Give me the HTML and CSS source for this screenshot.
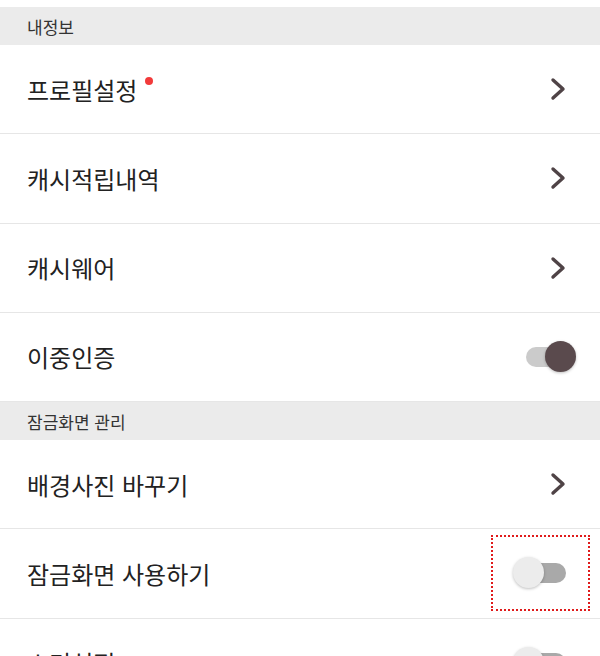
FILE: index.html
```html
<!DOCTYPE html>
<html lang="ko">
<head>
    <meta charset="UTF-8">
    <meta name="viewport" content="width=device-width, initial-scale=1.0">
    <title>설정</title>
    <link rel="stylesheet" href="styles.css">
</head>
<body>
    <div class="settings">
        <div class="section-title">내정보</div>

        <div class="row">
            <span class="label">프로필설정<span class="new-dot"></span></span>
            <svg class="chevron" viewBox="0 0 16 24"><path d="M3 3 L13 12 L3 21"/></svg>
        </div>
        <div class="row">
            <span class="label">캐시적립내역</span>
            <svg class="chevron" viewBox="0 0 16 24"><path d="M3 3 L13 12 L3 21"/></svg>
        </div>
        <div class="row">
            <span class="label">캐시웨어</span>
            <svg class="chevron" viewBox="0 0 16 24"><path d="M3 3 L13 12 L3 21"/></svg>
        </div>
        <div class="row">
            <span class="label">이중인증</span>
            <div class="switch on"><span class="track"></span><span class="knob"></span></div>
        </div>

        <div class="section-title">잠금화면 관리</div>

        <div class="row">
            <span class="label">배경사진 바꾸기</span>
            <svg class="chevron" viewBox="0 0 16 24"><path d="M3 3 L13 12 L3 21"/></svg>
        </div>
        <div class="row">
            <span class="label">잠금화면 사용하기</span>
            <div class="focus-box">
                <div class="switch"><span class="track"></span><span class="knob"></span></div>
            </div>
        </div>
        <div class="row">
            <span class="label">소리설정</span>
            <div class="switch"><span class="track"></span><span class="knob"></span></div>
        </div>
    </div>
</body>
</html>
```

FILE: styles.css
```css
* {
    box-sizing: border-box;
}

body {
    margin: 0;
    background-color: #ffffff;
    font-family: "Noto Sans CJK KR", "Noto Sans", sans-serif;
    color: #222;
    overflow: hidden;
}

.settings {
    padding-top: 7px;
}

.section-title {
    background-color: #ebebeb;
    height: 38px;
    padding-left: 27px;
    display: flex;
    align-items: center;
    font-size: 17px;
    color: #333;
}

.row {
    height: 89.25px;
    border-bottom: 1px solid #e6e6e6;
    display: flex;
    align-items: center;
    justify-content: space-between;
    padding: 0 24px 0 27px;
}

.label {
    font-size: 24px;
    position: relative;
}

.new-dot {
    position: absolute;
    top: 5px;
    right: -16px;
    width: 8px;
    height: 8px;
    border-radius: 50%;
    background-color: #f23a3a;
}

.chevron {
    width: 16px;
    height: 24px;
    margin-right: 10px;
    fill: none;
    stroke: #4f4346;
    stroke-width: 3.4;
    stroke-linecap: round;
    stroke-linejoin: round;
}

.switch {
    position: relative;
    width: 63px;
    height: 32px;
}

.switch .track {
    position: absolute;
    left: 13px;
    top: 6px;
    width: 40px;
    height: 20px;
    border-radius: 10px;
    background-color: #a9a9a9;
}

.switch .knob {
    position: absolute;
    left: 0;
    top: 0;
    width: 31px;
    height: 31px;
    border-radius: 50%;
    background-color: #ececec;
    box-shadow: 0 1px 3px rgba(0,0,0,0.25);
}

.switch.on .track {
    background-color: #cbcbcb;
}

.switch.on .knob {
    left: auto;
    right: 0;
    background-color: #5a4a4d;
}

.focus-box {
    width: 99px;
    height: 76px;
    border: 2px dotted #e01b1b;
    display: flex;
    align-items: center;
    padding-left: 20px;
    margin-right: -14px;
}
```
